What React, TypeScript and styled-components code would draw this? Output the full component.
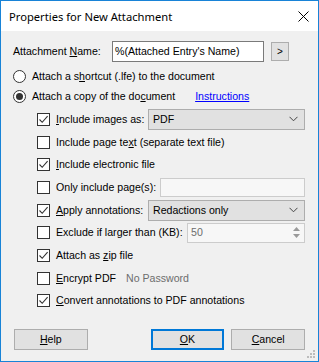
import React from "react";
import styled, { createGlobalStyle } from "styled-components";

const Global = createGlobalStyle`
  html, body { margin: 0; padding: 0; background: #ffffff; }
  body { font-family: "Liberation Sans", Arial, sans-serif; }
  * { box-sizing: border-box; }
`;

const Window = styled.div`
  position: relative;
  width: 319px;
  height: 362px;
  border: 1px solid #1883d7;
  background: #f0f0f0;
  display: flex;
  flex-direction: column;
  overflow: hidden;
`;

const TitleBar = styled.div`
  height: 30px;
  background: #ffffff;
  display: flex;
  align-items: center;
  justify-content: space-between;
  padding: 0 9px 0 8px;
  font-family: "Noto Sans", "Liberation Sans", sans-serif;
  font-size: 11.2px;
  color: #000;
`;

const Body = styled.div`
  flex: 1;
  display: flex;
  flex-direction: column;
  padding: 10px 13px 0 12px;
  font-size: 10.6px;
  color: #000;
  line-height: 13px;
`;

const NameRow = styled.div`
  display: flex;
  align-items: center;
  height: 21px;
`;

const Label = styled.span<{ $w?: number; $muted?: boolean }>`
  ${(p) => (p.$w ? `width: ${p.$w}px; flex: none;` : "")}
  white-space: nowrap;
  color: ${(p) => (p.$muted ? "#6d6d6d" : "#000")};
`;

const TextField = styled.div<{ $w: number; $h: number; $disabled?: boolean }>`
  width: ${(p) => p.$w}px;
  height: ${(p) => p.$h}px;
  flex: none;
  background: ${(p) => (p.$disabled ? "#f7f7f7" : "#ffffff")};
  border: 1px solid ${(p) => (p.$disabled ? "#cccccc" : "#7a7a7a")};
  display: flex;
  align-items: center;
  padding-left: 2px;
  white-space: nowrap;
  overflow: hidden;
`;

const SmallButton = styled.div`
  width: 18px;
  height: 19px;
  margin-left: 7px;
  background: #e1e1e1;
  border: 1px solid #adadad;
  display: flex;
  align-items: center;
  justify-content: center;
  font-size: 10px;
  padding-bottom: 1px;
`;

const RadioRow = styled.div`
  display: flex;
  align-items: center;
  height: 20px;
  margin-top: ${(p: { $first?: boolean }) => (p.$first ? "4px" : "0")};
`;

const Radio = styled.span<{ $on?: boolean }>`
  width: 13px;
  height: 13px;
  flex: none;
  border-radius: 50%;
  border: 1px solid #333333;
  background: #ffffff;
  margin-right: 6px;
  display: flex;
  align-items: center;
  justify-content: center;
  &::after {
    content: "";
    width: 7px;
    height: 7px;
    border-radius: 50%;
    background: ${(p) => (p.$on ? "#333333" : "transparent")};
  }
`;

const Link = styled.span`
  margin-left: 20px;
  color: #0000ff;
  text-decoration: underline;
`;

const Options = styled.div`
  display: flex;
  flex-direction: column;
  padding-left: 24px;
  margin-top: 2px;
`;

const CheckRow = styled.div`
  display: flex;
  align-items: center;
  height: 22.7px;
`;

const Box = styled.span`
  width: 13px;
  height: 13px;
  flex: none;
  border: 1px solid #333333;
  background: #ffffff;
  margin-right: 6px;
  display: flex;
  align-items: center;
  justify-content: center;
`;

const Combo = styled.div`
  margin-left: auto;
  width: 157px;
  height: 21px;
  background: #e1e1e1;
  border: 1px solid #adadad;
  display: flex;
  align-items: center;
  justify-content: space-between;
  padding: 0 6px 0 4px;
`;

const Spin = styled.div`
  margin-left: auto;
  width: 118px;
  height: 20px;
  background: #f7f7f7;
  border: 1px solid #cccccc;
  display: flex;
  align-items: center;
  justify-content: space-between;
  padding-left: 3px;
  color: #6d6d6d;
`;

const SpinArrows = styled.div`
  width: 15px;
  height: 100%;
  display: flex;
  flex-direction: column;
  align-items: center;
  justify-content: space-around;
  padding: 2px 0;
`;

const PushRight = styled.div`
  margin-left: auto;
`;

const ButtonRow = styled.div`
  display: flex;
  align-items: center;
  margin-top: 17px;
  padding-left: 1px;
`;

const Button = styled.div<{ $default?: boolean; $gap?: number }>`
  width: 74px;
  height: 21px;
  margin-left: ${(p) => p.$gap ?? 0}px;
  background: #e1e1e1;
  border: ${(p) => (p.$default ? "2px solid #0078d7" : "1px solid #adadad")};
  display: flex;
  align-items: center;
  justify-content: center;
  font-size: 10.6px;
`;

const Grip = styled.svg`
  position: absolute;
  right: 2px;
  bottom: 2px;
`;

const U = styled.span`
  text-decoration: underline;
`;

const CheckMark = () => (
  <svg width="11" height="11" viewBox="0 0 11 11">
    <path d="M1.5 5.5 L4.2 8.3 L9.6 2.2" fill="none" stroke="#333" strokeWidth="1.1" />
  </svg>
);

const Chevron = () => (
  <svg width="9" height="6" viewBox="0 0 9 6">
    <path d="M0.5 0.8 L4.5 4.8 L8.5 0.8" fill="none" stroke="#444" strokeWidth="1" />
  </svg>
);

const Check = ({ on }: { on?: boolean }) => <Box>{on ? <CheckMark /> : null}</Box>;

export default function App() {
  return (
    <>
      <Global />
      <Window>
        <TitleBar>
          <span>Properties for New Attachment</span>
          <svg width="11" height="11" viewBox="0 0 11 11">
            <path d="M0.5 0.5 L10.5 10.5 M10.5 0.5 L0.5 10.5" stroke="#000" strokeWidth="1" />
          </svg>
        </TitleBar>
        <Body>
          <NameRow>
            <Label $w={99}>
              Attachment <U>N</U>ame:
            </Label>
            <TextField $w={152} $h={21}>%(Attached Entry's Name)</TextField>
            <SmallButton>&gt;</SmallButton>
          </NameRow>
          <RadioRow $first>
            <Radio />
            <Label>
              Attach a s<U>h</U>ortcut (.lfe) to the document
            </Label>
          </RadioRow>
          <RadioRow>
            <Radio $on />
            <Label>
              Attach a copy of the do<U>c</U>ument
            </Label>
            <Link>Instructions</Link>
          </RadioRow>
          <Options>
            <CheckRow>
              <Check on />
              <Label>
                <U>I</U>nclude images as:
              </Label>
              <Combo>
                <span>PDF</span>
                <Chevron />
              </Combo>
            </CheckRow>
            <CheckRow>
              <Check />
              <Label>
                Include page te<U>x</U>t (separate text file)
              </Label>
            </CheckRow>
            <CheckRow>
              <Check on />
              <Label>
                <U>I</U>nclude electronic file
              </Label>
            </CheckRow>
            <CheckRow>
              <Check />
              <Label>
                Only include pa<U>g</U>e(s):
              </Label>
              <PushRight>
                <TextField $w={145} $h={19} $disabled />
              </PushRight>
            </CheckRow>
            <CheckRow>
              <Check on />
              <Label>
                <U>A</U>pply annotations:
              </Label>
              <Combo>
                <span>Redactions only</span>
                <Chevron />
              </Combo>
            </CheckRow>
            <CheckRow>
              <Check />
              <Label>Exclude if larger than (KB):</Label>
              <Spin>
                <span>50</span>
                <SpinArrows>
                  <svg width="7" height="4" viewBox="0 0 7 4">
                    <path d="M0 4 L3.5 0 L7 4 Z" fill="#9a9a9a" />
                  </svg>
                  <svg width="7" height="4" viewBox="0 0 7 4">
                    <path d="M0 0 L3.5 4 L7 0 Z" fill="#9a9a9a" />
                  </svg>
                </SpinArrows>
              </Spin>
            </CheckRow>
            <CheckRow>
              <Check on />
              <Label>
                Attach as <U>z</U>ip file
              </Label>
            </CheckRow>
            <CheckRow>
              <Check />
              <Label $w={70}>
                <U>E</U>ncrypt PDF
              </Label>
              <Label $muted>No Password</Label>
            </CheckRow>
            <CheckRow>
              <Check on />
              <Label>
                <U>C</U>onvert annotations to PDF annotations
              </Label>
            </CheckRow>
          </Options>
          <ButtonRow>
            <Button>
              <span>
                <U>H</U>elp
              </span>
            </Button>
            <Button $default $gap={63}>
              <span>
                <U>O</U>K
              </span>
            </Button>
            <Button $gap={7}>
              <span>
                <U>C</U>ancel
              </span>
            </Button>
          </ButtonRow>
        </Body>
        <Grip width="9" height="9" viewBox="0 0 9 9">
          <rect x="6" y="0" width="2" height="2" fill="#bcbcbc" />
          <rect x="3" y="3" width="2" height="2" fill="#bcbcbc" />
          <rect x="6" y="3" width="2" height="2" fill="#bcbcbc" />
          <rect x="0" y="6" width="2" height="2" fill="#bcbcbc" />
          <rect x="3" y="6" width="2" height="2" fill="#bcbcbc" />
          <rect x="6" y="6" width="2" height="2" fill="#bcbcbc" />
        </Grip>
      </Window>
    </>
  );
}
